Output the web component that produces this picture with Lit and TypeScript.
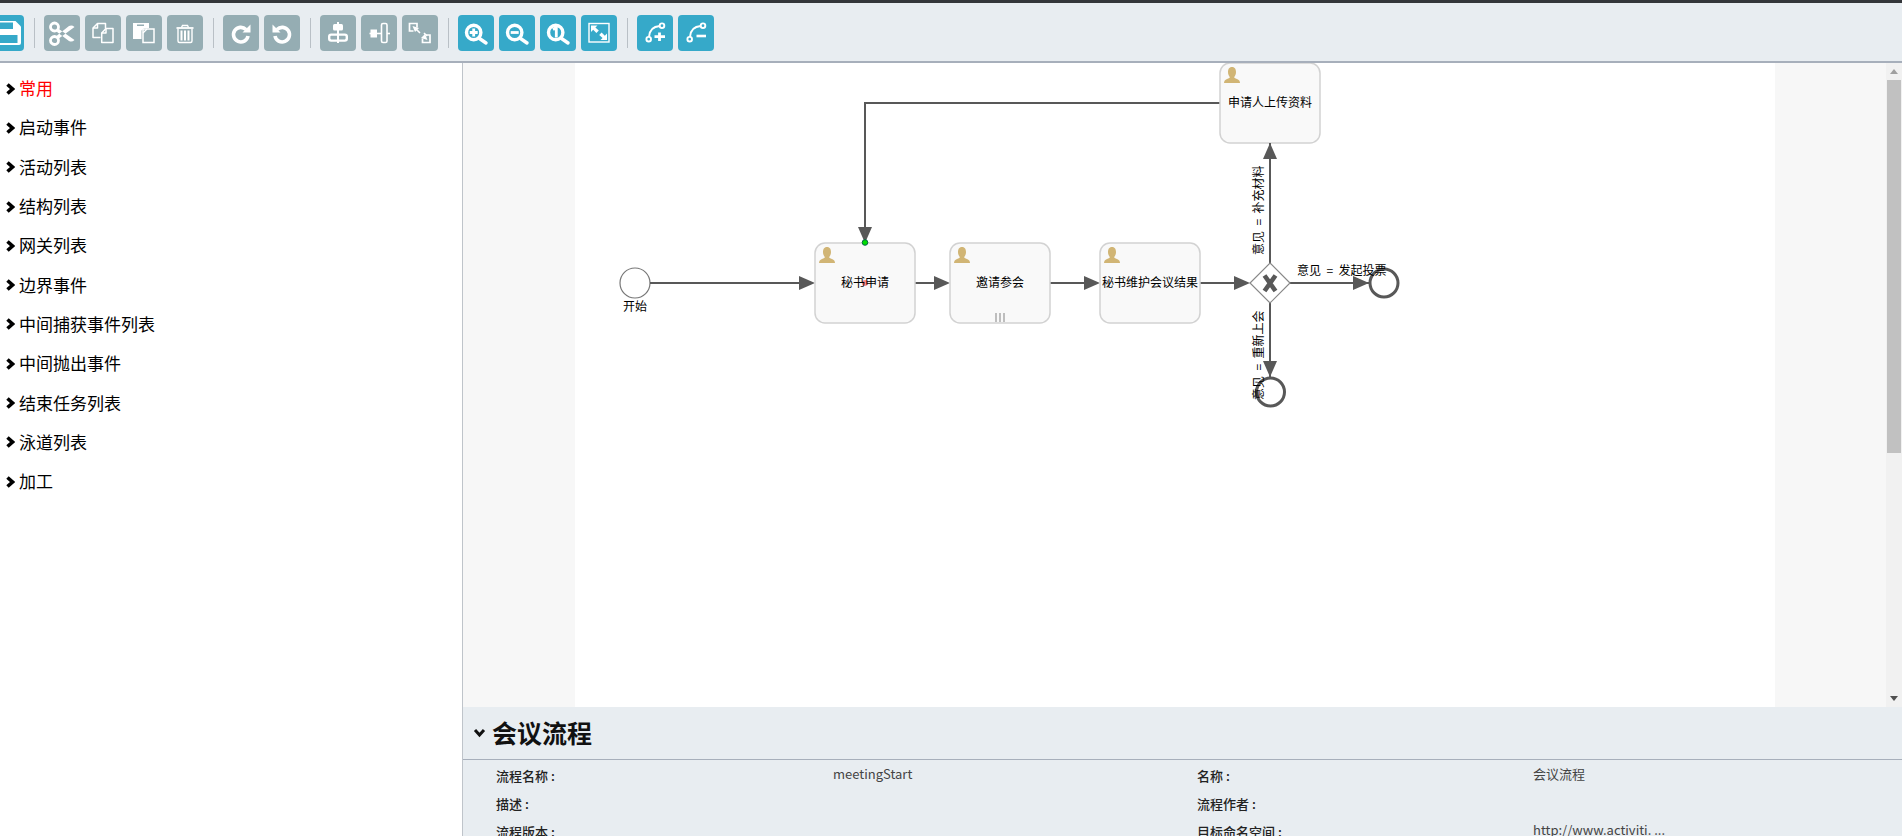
import { LitElement, html, css, svg } from "lit";
import { customElement } from "lit/decorators.js";

const ic = (body: unknown) => html`<svg class="ic" viewBox="0 0 36 36">${body}</svg>`;

const glass = svg`<circle cx="15.7" cy="17.5" r="7.2" fill="none" stroke="#fff" stroke-width="3.4"/><path d="M21.5 23.5 L28 28" stroke="#fff" stroke-width="3.4" stroke-linecap="round"/>`;
const curve = svg`<g fill="none" stroke="#fff" stroke-width="1.9"><circle cx="11.7" cy="24.2" r="2.3"/><circle cx="25" cy="10.7" r="2.3"/><path d="M12 21.8 C12.5 15.5 16 11.5 22.7 11"/></g>`;

const ICONS: Record<string, unknown> = {
  cut: svg`<g fill="none" stroke="#fff" stroke-width="2.8"><circle cx="10.5" cy="12" r="4"/><circle cx="10.5" cy="25.5" r="4"/></g><path fill="#fff" d="M13.5 13 L30.5 25 Q28 27.5 25 26 L13 17 Z M13.5 24.5 L30.5 12 Q28 9.8 25 11 L13 20.5 Z"/>`,
  copy: svg`<g fill="none" stroke="#fff" stroke-width="1.5" stroke-linejoin="round"><path d="M15.5 22.5 H8 V13 L12.5 8.5 H20.5 V13.5"/><path d="M12.5 8.5 V13 H8"/><path d="M16.7 27.5 V18 L21 13.5 H28 V27.5 Z"/><path d="M21 13.5 V18 H16.7"/></g>`,
  paste: svg`<path fill="#fff" d="M7 8 H23 V13 H18 L15.5 15.5 V24 H7 Z"/><path fill="#95adb3" d="M11 9.5 H18 V11 H11 Z"/><path fill="none" stroke="#fff" stroke-width="1.5" d="M17 14 H28 V27.5 H17 Z"/><path fill="none" stroke="#fff" stroke-width="1.2" d="M17 18 L21 14"/>`,
  trash: svg`<g fill="none" stroke="#fff" stroke-width="1.4"><path d="M11 14 V26 Q11 27.5 12.5 27.5 H23.5 Q25 27.5 25 26 V14"/><path d="M9.5 13 H26.5" stroke-width="1.8"/><path d="M14.5 12.5 L15.5 10.5 H20.5 L21.5 12.5"/><path d="M14.5 15.5 V25.5 M18 15.5 V25.5 M21.5 15.5 V25.5" stroke-width="2"/></g>`,
  redo: svg`<path fill="none" stroke="#fff" stroke-width="3.6" d="M23 14.5 A7.3 7.3 0 1 0 25 21"/><path fill="#fff" d="M27.5 9.5 V17.5 H19.5 Z"/>`,
  undo: svg`<path fill="none" stroke="#fff" stroke-width="3.6" d="M13 14.5 A7.3 7.3 0 1 1 11 21"/><path fill="#fff" d="M8.5 9.5 V17.5 H16.5 Z"/>`,
  alignc: svg`<g fill="none" stroke="#fff"><rect x="13" y="9" width="10" height="6.5" rx="1.5" fill="#fff" stroke="none"/><rect x="9.2" y="19.6" width="17.6" height="6" rx="2" stroke-width="2.4"/><path d="M18 7 V28" stroke-width="2"/></g>`,
  alignm: svg`<g fill="none" stroke="#fff" stroke-width="1.6"><path d="M8.5 18.5 H29"/><rect x="9.5" y="14.5" width="6.5" height="8" fill="#fff" stroke="none"/><rect x="20.5" y="8.5" width="5.5" height="19" rx="1.5" fill="#95adb3"/></g>`,
  size: svg`<g fill="none" stroke="#fff" stroke-width="1.7"><path d="M15 12.5 V8.5 H7.5 V16 H11.5"/><path d="M20.5 23.5 V27.5 H28 V20 H24"/><path d="M14 14 L18 18 M22 18 L25 21" stroke-width="1.6"/></g><path fill="#fff" d="M10.5 11 L17 13 L13 17 Z M25.5 25 L19 23 L23 19 Z"/>`,
  zin: svg`${glass}<path d="M11.7 17.5 H19.7 M15.7 13.5 V21.5" stroke="#fff" stroke-width="2.8"/>`,
  zout: svg`${glass}<path d="M11.7 17.5 H19.7" stroke="#fff" stroke-width="2.8"/>`,
  zone: svg`${glass}<path d="M13 14.5 L16.3 12.5 V22.5" fill="none" stroke="#fff" stroke-width="2.8"/>`,
  fit: svg`<rect x="8" y="8.5" width="20" height="18.5" fill="none" stroke="#fff" stroke-width="1.4"/><path fill="#fff" d="M10 10.5 H16.5 L14.4 12.6 L17.8 15.5 L15.4 18 L12.2 14.8 L10 17 Z M26 25 H19.5 L21.6 22.9 L18.2 20 L20.6 17.5 L23.8 20.7 L26 18.5 Z"/>`,
  badd: svg`${curve}<path d="M17.5 21.7 H28 M22.5 17.5 V26" stroke="#fff" stroke-width="2.8"/>`,
  bdel: svg`${curve}<path d="M18.5 21 H28" stroke="#fff" stroke-width="2.6"/>`,
};

const GROUPS: [string, string][][] = [
  [["cut", "g"], ["copy", "g"], ["paste", "g"], ["trash", "g"]],
  [["redo", "g"], ["undo", "g"]],
  [["alignc", "g"], ["alignm", "g"], ["size", "g"]],
  [["zin", "b"], ["zout", "b"], ["zone", "b"], ["fit", "b"]],
  [["badd", "b"], ["bdel", "b"]],
];

const MENU = ["常用", "启动事件", "活动列表", "结构列表", "网关列表", "边界事件", "中间捕获事件列表", "中间抛出事件", "结束任务列表", "泳道列表", "加工"];

const PROPS: [string, string, string, string][] = [
  ["流程名称 :", "meetingStart", "名称 :", "会议流程"],
  ["描述 :", "", "流程作者 :", ""],
  ["流程版本 :", "", "目标命名空间 :", "http://www.activiti. ..."],
];

const LINE = "#585858";

const user = (x: number, y: number) => svg`<path transform="translate(${x} ${y})" fill="#d1b575" d="M8 0 C11 0 12 2.5 12 5 C12 7.5 11 9 10.2 10 C10.2 11 11 11.3 13 12 C15 12.7 16 14 16 16 H0 C0 14 1 12.7 3 12 C5 11.3 5.8 11 5.8 10 C5 9 4 7.5 4 5 C4 2.5 5 0 8 0 Z"/>`;

const task = (x: number, y: number, label: string) => svg`
  <rect x=${x} y=${y} width="100" height="80" rx="10" fill="#f9f9f9" stroke="#d2d2d2" stroke-width="1.5"/>
  ${user(x + 4, y + 4)}
  <text x=${x + 50} y=${y + 44} text-anchor="middle" class="t">${label}</text>`;

const arrow = (x: number, y: number, dir: "r" | "u" | "d") => {
  const rot = dir === "r" ? 0 : dir === "u" ? -90 : 90;
  return svg`<path transform="translate(${x} ${y}) rotate(${rot})" fill=${LINE} d="M0 0 L-16 -7 V7 Z"/>`;
};

const Chevron = html`<svg class="chev" viewBox="0 0 10 12"><path d="M2.5 1.5 L7.5 6 L2.5 10.5" fill="none" stroke="#000" stroke-width="3.6"/></svg>`;

@customElement("app-root")
export class AppRoot extends LitElement {
  static styles = css`
    :host { display: flex; flex-direction: column; width: 1902px; height: 836px; overflow: hidden; background: #fff; font-family: "Noto Sans CJK SC", "Noto Sans", sans-serif; color: #000; }
    .top { height: 3px; background: #33363a; flex: none; }
    .toolbar { flex: none; height: 60px; box-sizing: border-box; background: #e8edf1; border-bottom: 2px solid #a7afbb; display: flex; align-items: flex-start; padding-top: 12px; overflow: hidden; }
    .btn { width: 36px; height: 36px; border-radius: 4px; flex: none; }
    .btn.g { background: #95adb3; }
    .btn.b { background: #36a9c9; }
    .save { margin-left: -12px; }
    .grp { display: flex; gap: 5px; }
    .sep { width: 1px; height: 30px; margin: 3px 9px 0 10px; background: #b9c0c6; flex: none; }
    .ic { display: block; width: 36px; height: 36px; }
    .main { flex: 1; display: flex; min-height: 0; }
    .side { width: 462px; flex: none; border-right: 1px solid #bfc4ca; padding-top: 5px; }
    .item { height: 39.3px; display: flex; align-items: center; padding-left: 5px; gap: 4px; font-size: 17px; line-height: 1; }
    .item.on { color: #f00; }
    .chev { width: 10px; height: 12px; flex: none; margin-top: 2px; }
    .right { flex: 1; display: flex; flex-direction: column; min-width: 0; }
    .canvas { height: 644px; flex: none; display: flex; position: relative; background: #f7f7f7; }
    .paper { width: 1200px; margin-left: 112px; background: #fff; }
    .draw { position: absolute; left: 0; top: 0; width: 1423px; height: 644px; }
    .t { font: 12px "Noto Sans CJK SC", sans-serif; fill: #000; white-space: pre; }
    .bar { position: absolute; right: 0; top: 0; bottom: 0; width: 16px; background: #f1f1f1; }
    .thumb { position: absolute; left: 1px; right: 1px; top: 17px; height: 373px; background: #c1c1c1; }
    .up, .down { position: absolute; left: 4px; width: 0; height: 0; border-left: 4px solid transparent; border-right: 4px solid transparent; }
    .up { top: 6px; border-bottom: 5px solid #a0a0a0; }
    .down { bottom: 6px; border-top: 5px solid #505050; }
    .panel { flex: 1; background: #e8edf1; min-height: 0; overflow: hidden; }
    .head { height: 53px; box-sizing: border-box; border-bottom: 1px solid #a7afbb; display: flex; align-items: center; padding: 0 0 2px 10px; gap: 6px; font-size: 25px; font-weight: 700; color: #111; }
    .head svg { width: 13px; height: 10px; flex: none; margin-top: 2px; }
    .rows { display: grid; grid-template-columns: 337px 364px 336px 1fr; grid-auto-rows: 28px; padding: 4px 0 0 33px; font-size: 13px; line-height: 18px; }
    .lab { font-weight: 500; color: #222; padding-top: 3px; }
    .val { color: #444; white-space: nowrap; padding-top: 1px; }
  `;

  render() {
    return html`
      <div class="top"></div>
      <div class="toolbar">
        <div class="btn b save">${ic(svg`<path fill="#fff" d="M3 6 H27.5 L33 11.5 V28 Q33 30 31 30 H5 Q3 30 3 28 Z"/><path fill="#36a9c9" d="M8 7.5 H25 V14 H8 Z M8 20 H29.5 V28 H8 Z"/>`)}</div>
        ${GROUPS.map((g) => html`<div class="sep"></div><div class="grp">${g.map(([k, c]) => html`<div class="btn ${c}">${ic(ICONS[k])}</div>`)}</div>`)}
      </div>
      <div class="main">
        <div class="side">
          ${MENU.map((m, i) => html`<div class="item ${i === 0 ? "on" : ""}">${Chevron}<span>${m}</span></div>`)}
        </div>
        <div class="right">
          <div class="canvas">
            <div class="paper"></div>
            <svg class="draw" viewBox="463 63 1423 644">
              <circle cx="635" cy="283" r="15" fill="#fff" stroke="#777" stroke-width="1.2"/>
              <text x="635" y="311" text-anchor="middle" class="t">开始</text>
              <path d="M650 283 H800 M915 283 H935 M1050 283 H1085 M1200 283 H1235" stroke=${LINE} stroke-width="2" fill="none"/>
              ${arrow(815, 283, "r")}${arrow(950, 283, "r")}${arrow(1100, 283, "r")}${arrow(1250, 283, "r")}
              <path d="M1220 103 H865 V230" stroke=${LINE} stroke-width="2" fill="none"/>
              ${arrow(865, 243, "d")}
              ${task(815, 243, "")}
              <circle cx="865" cy="242.5" r="2.8" fill="#0d0" stroke="#064" stroke-width="1"/>
              <circle cx="865" cy="283" r="3" fill="#f88"/>
              <text x="865" y="287" text-anchor="middle" class="t">秘书申请</text>
              ${task(950, 243, "邀请参会")}
              <path d="M996 313 V322 M1000 313 V322 M1004 313 V322" stroke="#aaa" stroke-width="1.5"/>
              ${task(1100, 243, "秘书维护会议结果")}
              ${task(1220, 63, "申请人上传资料")}
              <path d="M1270 143 V263 M1270 303 V377 M1290 283 H1369" stroke=${LINE} stroke-width="2" fill="none"/>
              ${arrow(1270, 143, "u")}${arrow(1270, 377, "d")}${arrow(1369, 283, "r")}
              <path d="M1270 263 L1290 283 L1270 303 L1250 283 Z" fill="#fff" stroke="#888" stroke-width="1.2"/>
              <path d="M1264.5 275.5 L1275.5 291 M1275.5 275.5 L1264.5 291" stroke=${LINE} stroke-width="4.6" fill="none"/>
              <circle cx="1384" cy="283" r="14" fill="#fff" stroke=${LINE} stroke-width="3"/>
              <circle cx="1270.5" cy="392" r="14" fill="#fff" stroke=${LINE} stroke-width="3"/>
              <text x="1297" y="275" class="t">意见  =  发起投票</text>
              <text transform="translate(1263 255) rotate(-90)" class="t">意见  =  补充材料</text>
              <text transform="translate(1263 400) rotate(-90)" class="t">意见  =  重新上会</text>
            </svg>
            <div class="bar"><div class="up"></div><div class="thumb"></div><div class="down"></div></div>
          </div>
          <div class="panel">
            <div class="head">
              <svg viewBox="0 0 13 10"><path d="M2 2 L6.5 7 L11 2" fill="none" stroke="#111" stroke-width="3"/></svg>
              <span>会议流程</span>
            </div>
            <div class="rows">
              ${PROPS.map((r) => html`<div class="lab">${r[0]}</div><div class="val">${r[1]}</div><div class="lab">${r[2]}</div><div class="val">${r[3]}</div>`)}
            </div>
          </div>
        </div>
      </div>
    `;
  }
}
